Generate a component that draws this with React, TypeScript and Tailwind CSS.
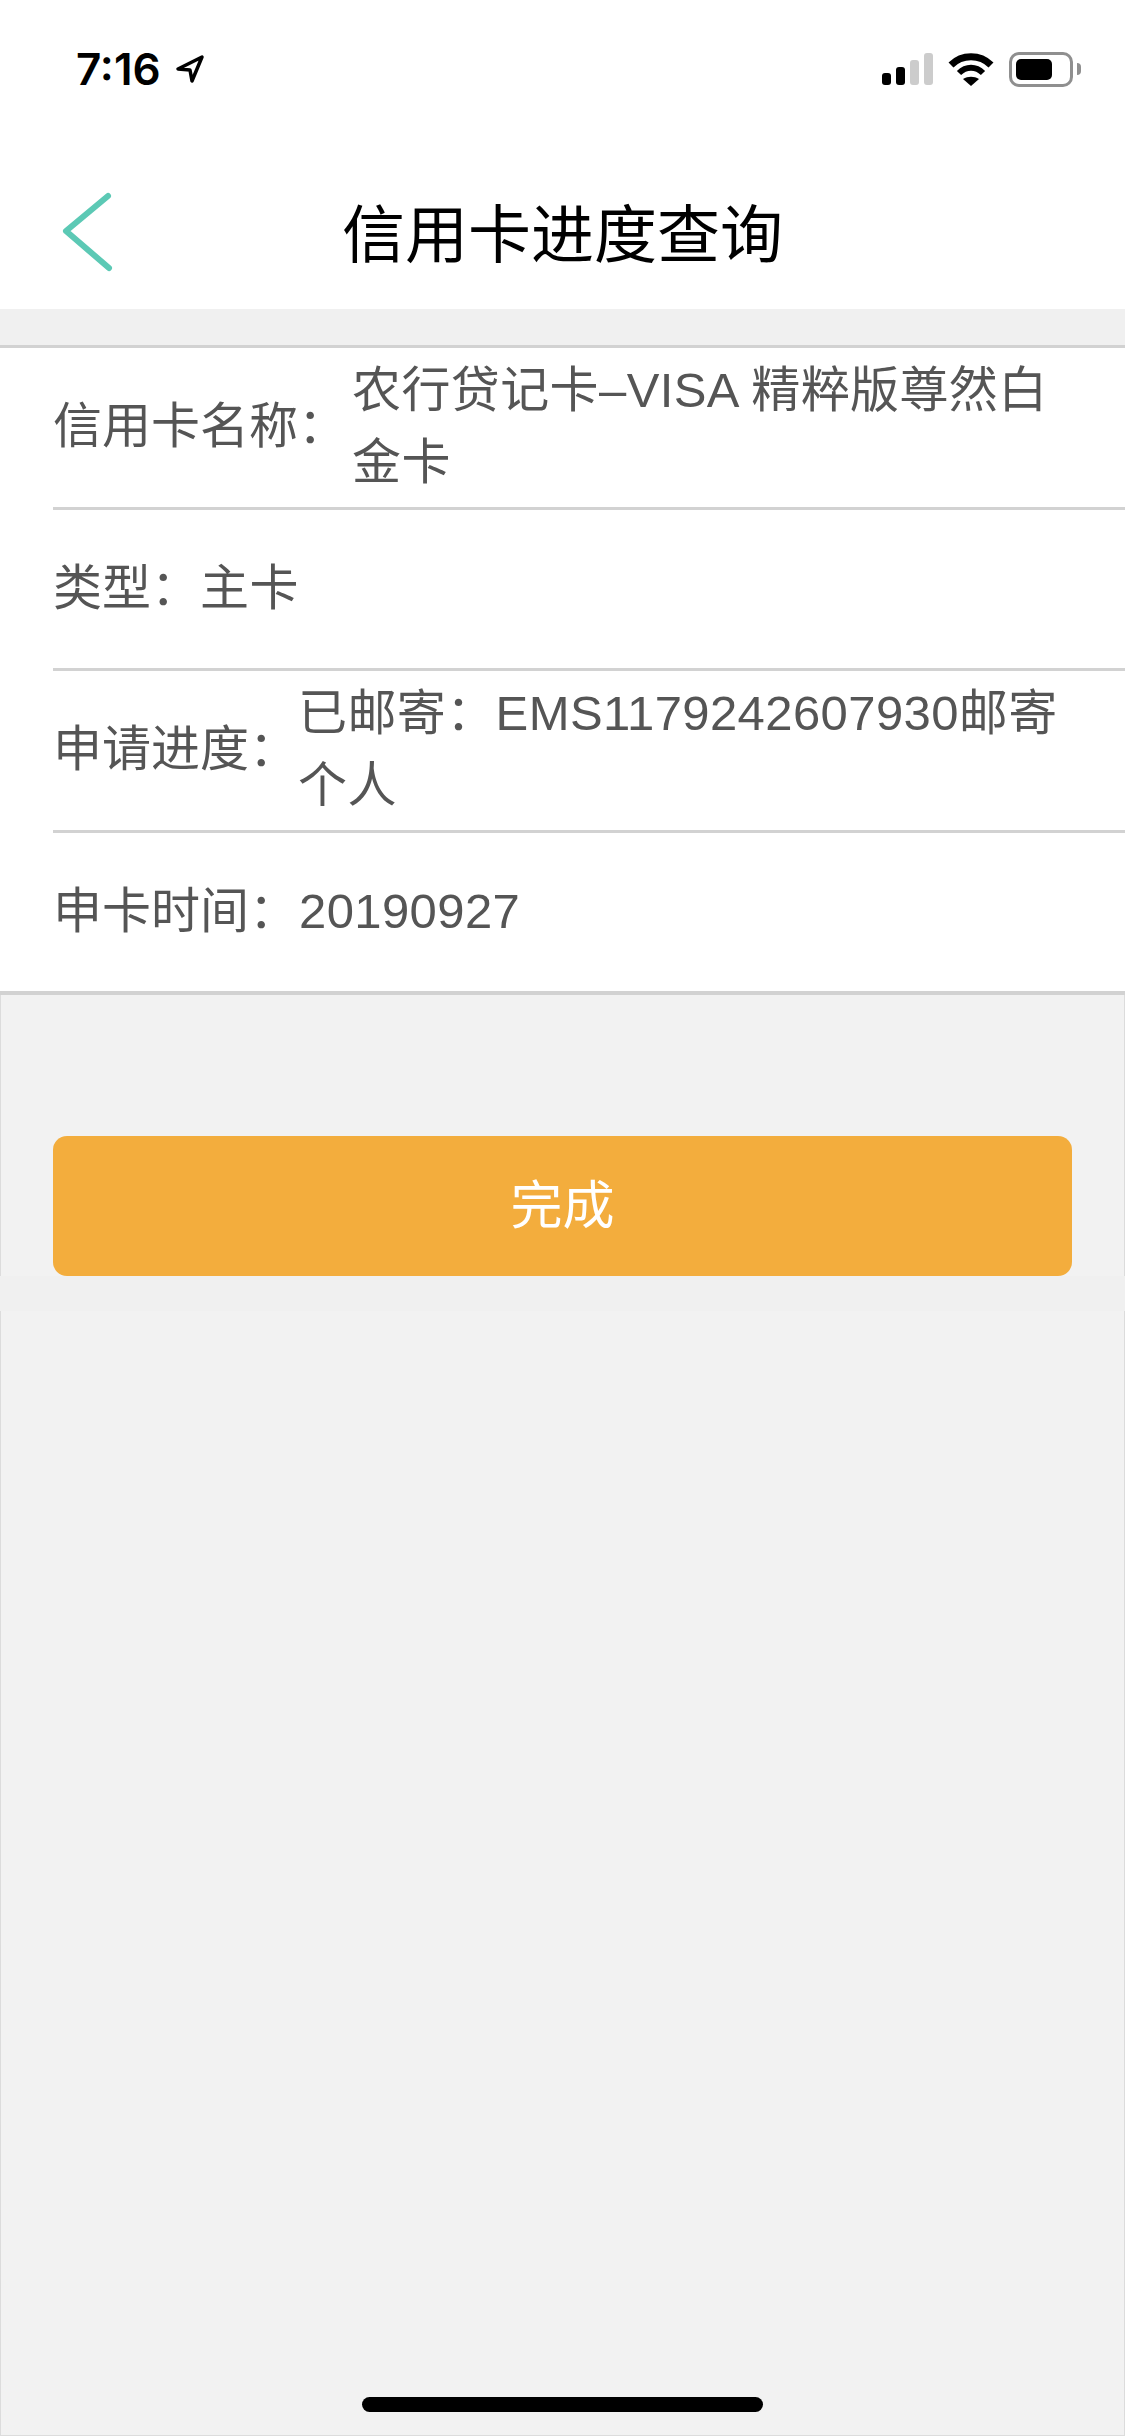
import React from "react";

const FONT = "font-['Liberation_Sans','Noto_Sans_CJK_SC',sans-serif]";

const rows = [
  { label: "信用卡名称：", value: "农行贷记卡–VISA 精粹版尊然白金卡", height: "h-[162px]", gap: "ml-[5px]" },
  { label: "类型：", value: "主卡", height: "h-[161px]", gap: "ml-0" },
  { label: "申请进度：", value: "已邮寄：EMS1179242607930邮寄个人", height: "h-[162px]", gap: "ml-0" },
  { label: "申卡时间：", value: "20190927", height: "h-[158px]", gap: "ml-[1px]" },
];

const StatusBar = () => (
  <div className="h-[132px] pt-[52px] pl-[76px] pr-[44px] flex items-start justify-between">
    <div className="flex items-center h-[34px]">
      <span className="font-['Inter',sans-serif] text-[44px] leading-[46px] font-semibold text-black">7:16</span>
      <svg width="30" height="30" viewBox="0 0 30 30" className="ml-[14px]">
        <path d="M3 15 L27 3 L17 27 L15 16 Z" fill="none" stroke="#000" strokeWidth="3.5" strokeLinejoin="round" />
      </svg>
    </div>
    <div className="flex items-center h-[34px]">
      <div className="flex items-end gap-[5px] h-[32px]">
        <div className="w-[9px] h-[12px] rounded-[3px] bg-black" />
        <div className="w-[9px] h-[18px] rounded-[3px] bg-black" />
        <div className="w-[9px] h-[25px] rounded-[3px] bg-[#cccccc]" />
        <div className="w-[9px] h-[32px] rounded-[3px] bg-[#cccccc]" />
      </div>
      <svg width="46" height="33" viewBox="0 0 46 33" className="ml-[15px]">
        <path d="M3 12 C14 1 32 1 43 12" fill="none" stroke="#000" strokeWidth="7" />
        <path d="M11 20 C18 13 28 13 35 20" fill="none" stroke="#000" strokeWidth="6" />
        <path d="M23 33 L15 26 C20 23 26 23 31 26 Z" fill="#000" />
      </svg>
      <div className="flex items-center ml-[15px]">
        <div className="w-[64px] h-[35px] rounded-[10px] border-[3px] border-[#8f8f8f] p-[4px]">
          <div className="w-[36px] h-full rounded-[5px] bg-black" />
        </div>
        <div className="ml-[4px] w-[4px] h-[12px] rounded-r-full bg-[#8f8f8f]" />
      </div>
    </div>
  </div>
);

export default function App() {
  return (
    <div className={`${FONT} w-[1125px] min-h-[2436px] flex flex-col bg-[#f0f0f0] relative`}>
      <div className="bg-white h-[309px]">
        <StatusBar />
        <div className="relative h-[177px] flex items-center justify-center pt-[28px]">
          <svg width="56" height="84" viewBox="0 0 56 84" className="absolute left-[60px] top-[58px]">
            <path d="M48 6 L6 41 L49 78" fill="none" stroke="#5cc9b5" strokeWidth="6" strokeLinecap="round" strokeLinejoin="round" />
          </svg>
          <h1 className="text-[63px] leading-[72px] font-normal text-black">信用卡进度查询</h1>
        </div>
      </div>

      <div className="h-[36px]" />

      <div className="bg-white border-t-[3px] border-b-[4px] border-[#d2d2d2]">
        {rows.map((row, i) => (
          <div
            key={row.label}
            className={`${row.height} ml-[53px] pr-[53px] pb-[3px] flex items-center text-[49px] leading-[72px] text-[#555555] ${i < rows.length - 1 ? "border-b-[3px] border-[#d2d2d2]" : ""}`}
          >
            <span className="shrink-0">{row.label}</span>
            <span className={`${row.gap} min-w-0 tracking-[0.4px]`}>{row.value}</span>
          </div>
        ))}
      </div>

      <div className="h-[281px] px-[52px] pt-[141px] border-x border-[#dcdcdc] bg-[#f2f2f2]">
        <button className="w-full h-[140px] rounded-[14px] bg-[#f3ad3d] text-white text-[52px]">完成</button>
      </div>

      <div className="h-[35px]" />

      <div className="flex-1 border-x border-b border-[#dcdcdc] bg-[#f2f2f2]" />

      <div className="absolute left-[362px] bottom-[24px] w-[401px] h-[15px] rounded-full bg-black" />
    </div>
  );
}
